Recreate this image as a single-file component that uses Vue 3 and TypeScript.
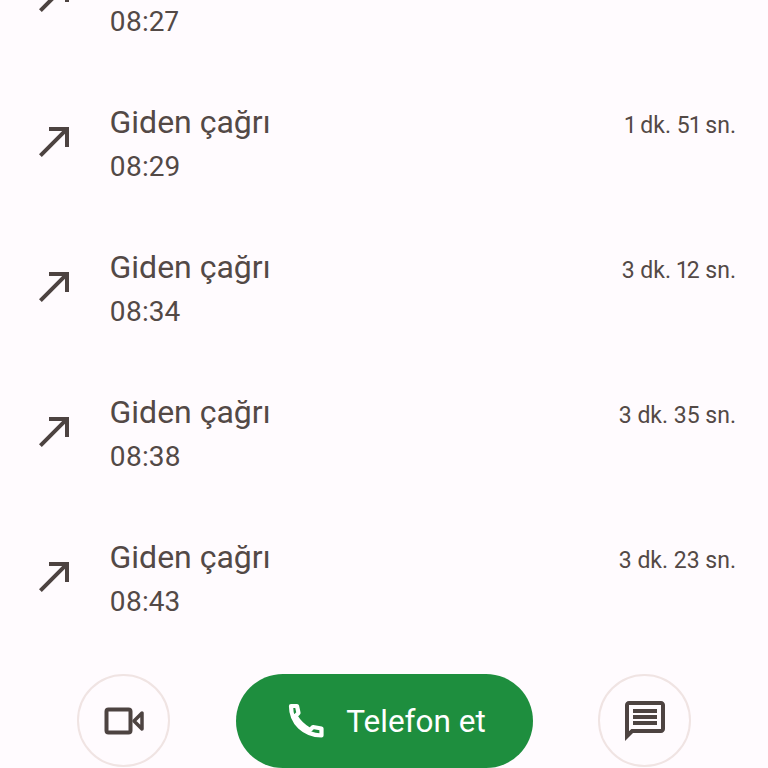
<script setup lang="ts">
const calls = [
  { time: '08:27', duration: '' },
  { time: '08:29', duration: '1 dk. 51 sn.' },
  { time: '08:34', duration: '3 dk. 12 sn.' },
  { time: '08:38', duration: '3 dk. 35 sn.' },
  { time: '08:43', duration: '3 dk. 23 sn.' },
]
</script>

<template>
  <div class="screen">
    <div class="list">
      <div v-for="call in calls" :key="call.time" class="row">
        <svg class="arrow" viewBox="0 0 24 24"><path d="M9 5v2h6.59L4 18.59 5.41 20 17 8.41V15h2V5z" /></svg>
        <div class="texts">
          <div class="title">Giden çağrı</div>
          <div class="time">{{ call.time }}</div>
        </div>
        <div class="duration">{{ call.duration }}</div>
      </div>
    </div>
    <div class="actions">
      <button class="round">
        <svg width="48" height="48" viewBox="0 0 48 48">
          <rect x="6.500" y="12.500" width="24" height="23" rx="2" fill="none" stroke="#4d4341" stroke-width="4" />
          <path d="M34 24l8-8v16z" fill="none" stroke="#4d4341" stroke-width="3.500" stroke-linejoin="round" />
        </svg>
      </button>
      <button class="call">
        <svg class="phone" viewBox="0 0 48 48">
          <path d="M9 9H15L16.500 16 13.500 19C17 25 21 29 28 33L31 30 39.500 31.500V38.500C22 38 9 26 9 9Z" fill="none" stroke="#fff" stroke-width="4.200" stroke-linejoin="round" />
        </svg>
        <span>Telefon et</span>
      </button>
      <button class="round">
        <svg width="48" height="48" viewBox="0 0 24 24"><path fill="#4d4341" d="M20 2H4c-1.100 0-2 .9-2 2v18l4-4h14c1.100 0 2-.9 2-2V4c0-1.100-.9-2-2-2zm0 14H5.170L4 17.170V4h16v12zM6 12h12v2H6zm0-3h12v2H6zm0-3h12v2H6z" /></svg>
      </button>
    </div>
  </div>
</template>

<style>
html, body { margin: 0; background: #fffbfe; }
</style>

<style scoped>
.screen {
  width: 768px;
  height: 768px;
  overflow: hidden;
  display: flex;
  flex-direction: column;
  background: #fffbfe;
  font-family: Roboto, "Noto Sans", sans-serif;
  font-variant-numeric: proportional-nums;
  color: #534946;
}
.list {
  flex: 1;
  min-height: 0;
  display: flex;
  flex-direction: column;
  justify-content: flex-end;
}
.row {
  flex: none;
  height: 145px;
  display: flex;
  align-items: center;
  padding: 0 32px 0 31px;
}
.arrow {
  width: 48px;
  height: 48px;
  fill: #4d4341;
  flex: none;
  margin-right: 30.500px;
  margin-bottom: 4px;
}
.texts { flex: 1; }
.title { font-size: 32px; line-height: 44px; margin-top: 3px; }
.time { font-size: 28px; line-height: 44px; margin-top: 1px; }
.duration { font-size: 23px; margin-bottom: 34px; }
.actions {
  flex: none;
  height: 94px;
  margin-top: 24px;
  display: flex;
  align-items: flex-start;
  padding-left: 77px;
}
button { font-family: inherit; padding: 0; }
.round {
  width: 93px;
  height: 93px;
  border-radius: 50%;
  border: 2px solid #f0e4e3;
  background: transparent;
  display: flex;
  align-items: center;
  justify-content: center;
}
.round:last-child { margin-left: 65.500px; }
.call {
  width: 297px;
  height: 94px;
  margin-left: 65.500px;
  border: none;
  border-radius: 47px;
  background: #1e8e3e;
  color: #fff;
  font-size: 31.500px;
  display: flex;
  align-items: center;
  justify-content: center;
  gap: 16px;
}
.phone { width: 48px; height: 48px; }
</style>
